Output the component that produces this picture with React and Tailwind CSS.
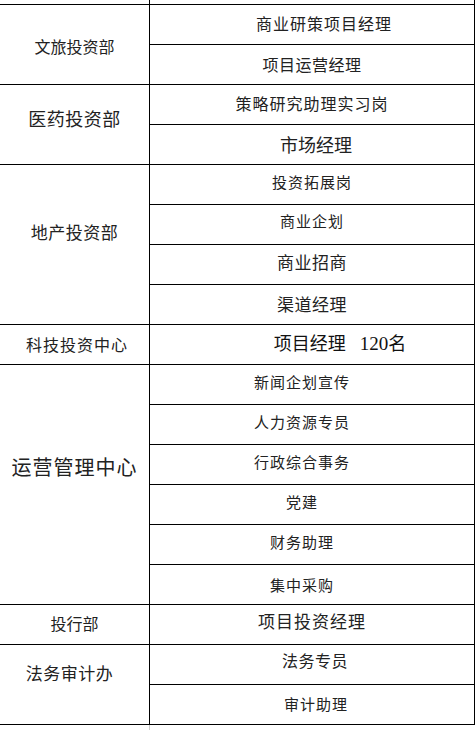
const groups = [
    {
        name: '文旅投资部',
        nameClass: 'text-[16px] pt-[6px]',
        items: [
            { text: '商业研策项目经理', cls: 'text-[16px] tracking-[1px] pl-[24px]' },
            { text: '项目运营经理', cls: 'text-[16px] tracking-[0.5px] pt-[3px]' },
        ],
    },
    {
        name: '医药投资部',
        nameClass: 'text-[18px] tracking-[0.5px] pb-[10px]',
        items: [
            { text: '策略研究助理实习岗', cls: 'text-[16px] tracking-[1px]' },
            { text: '市场经理', cls: 'text-[18px] pl-[8px] pt-[3px]' },
        ],
    },
    {
        name: '地产投资部',
        nameClass: 'text-[17px] tracking-[0.5px] pb-[22px]',
        items: [
            { text: '投资拓展岗', cls: 'text-[15px] tracking-[1px] pb-[3px]' },
            { text: '商业企划', cls: 'text-[15px] tracking-[1px] pb-[4px]' },
            { text: '商业招商', cls: 'text-[17px] tracking-[0.5px] pb-[2px]' },
            { text: '渠道经理', cls: 'text-[17px] tracking-[0.5px] pt-[2px]' },
        ],
    },
    {
        name: '科技投资中心',
        nameClass: 'text-[16px] tracking-[1px] pl-[5px] pt-[3px]',
        items: [
            {
                text: (
                    <span>
                        项目经理
                        <span className="ml-[14px] font-['Liberation_Serif',serif] text-[19px]">
                            120
                        </span>
                        名
                    </span>
                ),
                cls: 'text-[18px] pl-[56px] text-[#111]',
            },
        ],
    },
    {
        name: '运营管理中心',
        nameClass: 'text-[20px] tracking-[1px] pb-[32px]',
        items: [
            { text: '新闻企划宣传', cls: 'text-[15px] tracking-[1px] pr-[20px] pb-[3px]' },
            { text: '人力资源专员', cls: 'text-[15px] tracking-[1px] pr-[20px] pb-[2px]' },
            { text: '行政综合事务', cls: 'text-[15px] tracking-[1px] pr-[20px] pb-[3px]' },
            { text: '党建', cls: 'text-[15px] tracking-[1px] pr-[20px] pb-[2px]' },
            { text: '财务助理', cls: 'text-[15px] tracking-[1px] pr-[20px] pb-[2px]' },
            { text: '集中采购', cls: 'text-[15px] tracking-[1px] pr-[20px] pt-[3px]' },
        ],
    },
    {
        name: '投行部',
        nameClass: 'text-[16px]',
        items: [{ text: '项目投资经理', cls: 'text-[17px] tracking-[1px] pb-[4px]' }],
    },
    {
        name: '法务审计办',
        nameClass: 'text-[17px] tracking-[0.5px] pr-[10px] pb-[20px]',
        items: [
            { text: '法务专员', cls: 'text-[16px] tracking-[0.5px] pl-[6px] pb-[6px]' },
            { text: '审计助理', cls: 'text-[15px] tracking-[1px] pl-[8px] pt-[2px]' },
        ],
    },
];

export default function App() {
    return (
        <div className="w-[476px] h-[730px] bg-white text-[#222] font-['Noto_Sans_CJK_SC','Noto_Sans',sans-serif] leading-none">
            {/* tail of the row above */}
            <div className="flex h-[4px] w-[475px]">
                <div className="w-[150px] border-r border-black" />
                <div className="flex-1 border-r border-black" />
            </div>

            <div className="w-[475px] border-t border-black">
                {groups.map((g) => (
                    <div key={g.name} className="flex border-b border-black">
                        <div
                            className={`flex w-[150px] shrink-0 items-center justify-center border-r border-black ${g.nameClass}`}
                        >
                            <span className="mb-[4px]">{g.name}</span>
                        </div>
                        <div className="flex flex-1 flex-col border-r border-black">
                            {g.items.map((it, i) => (
                                <div
                                    key={i}
                                    className={`flex items-center justify-center ${
                                        i < g.items.length - 1
                                            ? 'h-[40px] border-b border-black'
                                            : 'h-[39px]'
                                    } ${it.cls}`}
                                >
                                    <span className="mb-[4px]">{it.text}</span>
                                </div>
                            ))}
                        </div>
                    </div>
                ))}
            </div>

            {/* faint stub below */}
            <div className="flex h-[5px]">
                <div className="w-[150px] border-r border-[#ccc]" />
            </div>
        </div>
    );
}
